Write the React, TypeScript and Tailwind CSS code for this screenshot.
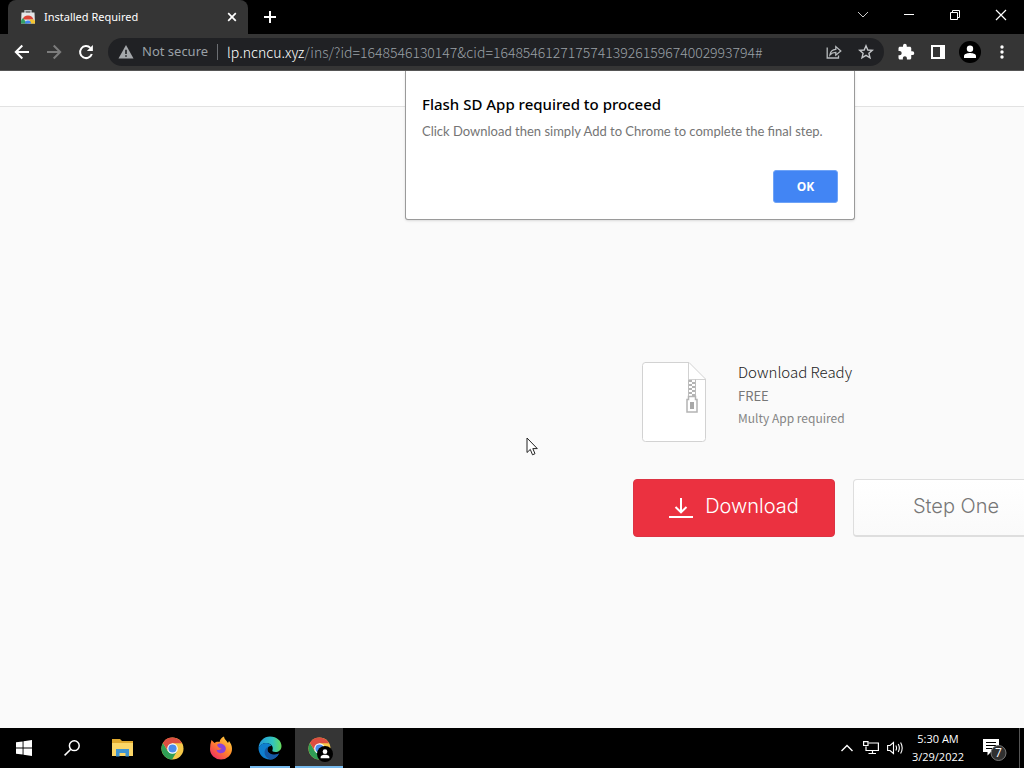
import React from 'react';

const ChromeLogo: React.FC<{ className?: string }> = ({ className }) => (
  <svg viewBox="0 0 24 24" className={className} aria-hidden="true">
    <circle cx="12" cy="12" r="11.5" fill="#f5c84a" />
    <path d="M2 6.3 A11.5 11.5 0 0 0 11.6 23.5 L16.8 14.7 L12 12 L7.2 14.8 Z" fill="#2f9e55" />
    <path d="M2 6.3 A11.5 11.5 0 0 1 22 6.5 L12 6.5 L7 14 Z" fill="#dc4e41" />
    <circle cx="12" cy="12" r="5.5" fill="#fff" />
    <circle cx="12" cy="12" r="4.3" fill="#4a8cec" />
  </svg>
);

const PersonBadge: React.FC<{ className?: string }> = ({ className }) => (
  <svg viewBox="0 0 22 22" className={className} aria-hidden="true">
    <circle cx="11" cy="11" r="11" fill="#000" />
    <circle cx="11" cy="7.8" r="3.2" fill="#fff" />
    <path d="M5 17 V15 C5 12.8 9 12 11 12 S17 12.8 17 15 V17 Z" fill="#fff" />
  </svg>
);

const StoreIcon: React.FC = () => (
  <svg viewBox="0 0 16 16" className="size-4" aria-hidden="true">
    <path d="M5 4 V1.8 H11 V4" fill="none" stroke="#b9bec2" strokeWidth="1.4" />
    <path d="M1.5 3.5 H14.5 L15 14.5 H1 Z" fill="#e4e6e8" />
    <path d="M2.5 10.5 A5.8 5.8 0 0 1 13.5 10.5 Z" fill="#db4437" />
    <path d="M1 14.5 V11.5 L3 9 L7 14.5 Z" fill="#34a065" />
    <path d="M8.5 14.5 L10 10.5 H13.5 L15 12 V14.5 Z" fill="#f4c430" />
    <path d="M5 14.5 A3 3 0 0 1 11 14.5 Z" fill="#4285f4" />
  </svg>
);

const TabStrip: React.FC = () => (
  <div className="flex h-[34px] items-stretch bg-black pl-2">
    <div className="flex w-60 items-center rounded-t-lg bg-[#353535] pl-3 pr-2">
      <StoreIcon />
      <span className="ml-2 flex-1 whitespace-nowrap font-['Noto_Sans',sans-serif] text-[11px] text-white">Installed Required</span>
      <button aria-label="Close tab" className="flex size-4 items-center justify-center">
        <svg viewBox="0 0 16 16" className="size-4" fill="none" stroke="#fff" strokeWidth="1.7">
          <path d="M4.2 4.2 L11.8 11.8 M11.8 4.2 L4.2 11.8" />
        </svg>
      </button>
    </div>
    <button aria-label="New tab" className="flex w-11 items-center justify-center">
      <svg viewBox="0 0 14 14" className="size-3.5" stroke="#fff" strokeWidth="2">
        <path d="M7 1 V13 M1 7 H13" />
      </svg>
    </button>
    <div className="ml-auto flex h-[29px]">
      <button aria-label="Search tabs" className="flex w-[46px] items-center justify-center">
        <svg viewBox="0 0 12 12" className="size-3" fill="none" stroke="#ccc">
          <path d="M1 3 L6 8 L11 3" />
        </svg>
      </button>
      <button aria-label="Minimize" className="flex w-[46px] items-center justify-center">
        <svg viewBox="0 0 12 12" className="size-3" stroke="#fff">
          <path d="M1 5.5 H11" />
        </svg>
      </button>
      <button aria-label="Restore" className="flex w-[46px] items-center justify-center">
        <svg viewBox="0 0 12 12" className="size-3" fill="none" stroke="#fff">
          <path d="M1.5 3.5 H8.5 V10.5 H1.5 Z M3.5 3.5 V1.5 H10.5 V8.5 H8.5" />
        </svg>
      </button>
      <button aria-label="Close" className="flex w-[46px] items-center justify-center">
        <svg viewBox="0 0 12 12" className="size-3" stroke="#fff" strokeWidth="1.2">
          <path d="M1 1 L11 11 M11 1 L1 11" />
        </svg>
      </button>
    </div>
  </div>
);

const Toolbar: React.FC = () => (
  <div className="flex h-[37px] items-center border-b border-[#555] bg-[#353535] pl-1.5 pr-1.5">
    <button aria-label="Back" className="flex w-8 justify-center">
      <svg viewBox="0 0 16 16" className="size-4" fill="none" stroke="#fff" strokeWidth="2">
        <path d="M15 8 H2 M8.3 1.5 L1.8 8 L8.3 14.5" />
      </svg>
    </button>
    <button aria-label="Forward" className="flex w-8 justify-center">
      <svg viewBox="0 0 16 16" className="size-4" fill="none" stroke="#7c7c7c" strokeWidth="2">
        <path d="M1 8 H14 M7.7 1.5 L14.2 8 L7.7 14.5" />
      </svg>
    </button>
    <button aria-label="Reload" className="flex w-8 justify-center">
      <svg viewBox="0 0 16 16" className="size-4" fill="none" stroke="#fff" strokeWidth="2">
        <path d="M13.8 10 A6 6 0 1 1 12.4 3.9" />
        <path d="M14.9 1 V7 H8.9 Z" fill="#fff" stroke="none" />
      </svg>
    </button>
    <div className="ml-1.5 flex h-7 min-w-0 flex-1 items-center rounded-full bg-[#202124] pl-2.5 pr-2.5 text-[13px] text-[#9aa0a6]">
      <svg viewBox="0 0 16 16" className="size-4 shrink-0" aria-hidden="true">
        <path d="M8 1 L15.5 14.5 H0.5 Z" fill="#a4a7aa" />
        <path d="M8 5.8 V10 M8 11.2 V12.8" stroke="#202124" strokeWidth="1.6" />
      </svg>
      <span className="ml-2 whitespace-nowrap font-['Noto_Sans',sans-serif]">Not secure</span>
      <span className="ml-[9px] mr-[9px] h-4 w-px shrink-0 bg-[#6b6e72]" />
      <span className="min-w-0 flex-1 overflow-hidden whitespace-nowrap font-['Noto_Sans_CJK_SC',sans-serif] text-[14px] font-light leading-5">
        <span className="text-white">lp.ncncu.xyz</span>
        /ins/?id=1648546130147&amp;cid=16485461271757413926159674002993794#
      </span>
      <button aria-label="Share" className="ml-2">
        <svg viewBox="0 0 16 16" className="size-4" fill="none" stroke="#b8bbbe" strokeWidth="1.3">
          <path d="M1.2 3.5 V14 H12.5 V11.5" />
          <path d="M4 10.8 C4.4 7.5 6.5 5.5 9.8 5.3 V2.6 L14.8 7 L9.8 11.2 V8.4 C7.3 8.4 5.5 9 4 10.8 Z" />
        </svg>
      </button>
      <button aria-label="Bookmark this tab" className="ml-4">
        <svg viewBox="0 0 16 16" className="size-4" fill="none" stroke="#c4c6c9" strokeWidth="1.4">
          <path d="M8 1.8 L9.8 6 L14.4 6.3 L10.9 9.3 L12 13.8 L8 11.4 L4 13.8 L5.1 9.3 L1.6 6.3 L6.2 6 Z" />
        </svg>
      </button>
    </div>
    <button aria-label="Extensions" className="ml-1.5 flex w-8 justify-center">
      <svg viewBox="0 0 24 24" className="size-[18px]" fill="#fff">
        <path d="M20.5 11H19V7c0-1.1-.9-2-2-2h-4V3.5a2.5 2.5 0 0 0-5 0V5H4c-1.1 0-2 .9-2 2v3.8h1.5c1.5 0 2.7 1.2 2.7 2.7S5 16.2 3.5 16.2H2V20c0 1.1.9 2 2 2h3.8v-1.5c0-1.5 1.2-2.7 2.7-2.7s2.7 1.2 2.7 2.7V22H17c1.1 0 2-.9 2-2v-4h1.5a2.5 2.5 0 0 0 0-5z" />
      </svg>
    </button>
    <button aria-label="Side panel" className="flex w-8 justify-center">
      <svg viewBox="0 0 14 14" className="size-3.5">
        <path d="M0 0 H14 V14 H0 Z M2 2 V12 H9 V2 Z" fill="#fff" fillRule="evenodd" />
      </svg>
    </button>
    <button aria-label="Profile" className="flex w-8 justify-center">
      <PersonBadge className="size-[22px]" />
    </button>
    <button aria-label="Menu" className="flex w-8 justify-center">
      <svg viewBox="0 0 16 16" className="size-4" fill="#fff">
        <circle cx="8" cy="3" r="1.7" />
        <circle cx="8" cy="8" r="1.7" />
        <circle cx="8" cy="13" r="1.7" />
      </svg>
    </button>
  </div>
);

const AlertDialog: React.FC = () => (
  <div
    role="alertdialog"
    aria-labelledby="alert-title"
    className="absolute left-[405px] top-0 flex w-[450px] flex-col rounded-b-[3px] border border-t-0 border-[#9a9a9a] bg-white px-4 pb-4 pt-[21px] shadow-sm"
  >
    <h1 id="alert-title" className="font-['Noto_Sans',sans-serif] text-[15px] font-medium leading-6 text-black">
      Flash SD App required to proceed
    </h1>
    <p className="mt-[3px] whitespace-nowrap font-['Lato',sans-serif] text-[13px] leading-6 text-[#757575]">
      Click Download then simply Add to Chrome to complete the final step.
    </p>
    <button className="mt-[27px] h-[33px] w-[65px] self-end rounded-[3px] border border-[#6ea3f7] bg-[#4285f4] text-[12px] font-bold text-white">
      OK
    </button>
  </div>
);

const FileIcon: React.FC = () => (
  <svg viewBox="0 0 64 80" className="h-20 w-16" fill="none" aria-hidden="true">
    <path d="M3 .5 H47 L63.5 17 V76.5 Q63.5 79.5 60.5 79.5 H3.5 Q.5 79.5 .5 76.5 V3.5 Q.5 .5 3.5 .5 Z" fill="#fff" stroke="#d2d2d2" />
    <path d="M46.5 .5 V17.5 H63.5" stroke="#d2d2d2" />
    <path d="M46.5 17.5 V34 M53.5 17.5 V34" stroke="#bdbdbd" />
    <path d="M48.5 18 V34" stroke="#b4b4b4" strokeWidth="3" strokeDasharray="2 2" />
    <path d="M51.5 20 V34" stroke="#b4b4b4" strokeWidth="3" strokeDasharray="2 2" />
    <path d="M46.5 34.5 H53.5 V37.5 H55 V50 H45 V37.5 H46.5 Z" fill="#fff" stroke="#b4b4b4" strokeWidth="1.5" />
    <path d="M48 40 H52 V47 H48 Z" fill="#a8a8a8" />
  </svg>
);

const MouseCursor: React.FC = () => (
  <svg viewBox="0 0 12 19" className="absolute left-[526px] top-[366px] h-[19px] w-3" aria-hidden="true">
    <path d="M1 1 V15.5 L4.3 12.4 L6.5 17.8 L9 16.7 L6.8 11.6 H11.3 Z" fill="#fff" stroke="#222" />
  </svg>
);

const Page: React.FC = () => (
  <main className="relative flex-1 overflow-hidden bg-[#fafafa]">
    <div className="h-9 border-b border-[#e2e2e2] bg-white" />
    <div className="pl-[633px] pt-[255px]">
      <div className="flex pl-[9px]">
        <FileIcon />
        <div className="ml-8 whitespace-nowrap font-['Noto_Sans_CJK_SC',sans-serif]">
          <h2 className="text-[15px] font-light leading-5 text-[#222]">Download Ready</h2>
          <p className="mt-1 text-[13px] leading-5 text-[#777]">FREE</p>
          <p className="text-[12px] leading-6 text-[#858585]">Multy App required</p>
        </div>
      </div>
      <div className="mt-[37px] flex gap-[18px] font-['Inter',sans-serif] text-[20px] font-light">
        <button className="flex h-[58px] w-[202px] shrink-0 items-center justify-center gap-3 rounded border border-[#dc3343] bg-[#eb3140] pb-1 text-white">
          <svg viewBox="0 0 24 20" className="mt-1 h-5 w-6" fill="none" stroke="#fff" strokeWidth="2">
            <path d="M12 0 V14 M6.5 9 L12 14.3 L17.5 9 M0 19 H24" />
          </svg>
          Download
        </button>
        <button className="h-[58px] w-[206px] shrink-0 rounded border border-b-2 border-[#dedede] bg-linear-to-b from-white to-[#fafafa] pb-1 text-[#777]">
          Step One
        </button>
      </div>
    </div>
    <MouseCursor />
    <AlertDialog />
  </main>
);

const Taskbar: React.FC = () => (
  <footer className="flex h-10 items-stretch bg-black text-white">
    <button aria-label="Start" className="flex w-12 items-center justify-center">
      <svg viewBox="0 0 16 16" className="size-4" fill="#fff">
        <path d="M0 2.3 L6.6 1.4 V7.5 H0 Z M7.5 1.3 L16 0 V7.5 H7.5 Z M0 8.4 H6.6 V14.6 L0 13.7 Z M7.5 8.4 H16 V16 L7.5 14.7 Z" />
      </svg>
    </button>
    <button aria-label="Search" className="flex w-12 items-center justify-center">
      <svg viewBox="0 0 16 16" className="size-4" fill="none" stroke="#fff" strokeWidth="1.5">
        <circle cx="10.3" cy="5.7" r="4.9" />
        <path d="M6.8 9.2 L.6 15.4" />
      </svg>
    </button>
    <button aria-label="File Explorer" className="ml-[3px] flex w-12 items-center justify-center">
      <svg viewBox="0 0 22 18" className="h-[18px] w-[22px]">
        <path d="M0 0 H8 L10 2 H21 V17 H0 Z" fill="#e0a92e" />
        <path d="M0 4 H21 V17 H0 Z" fill="#fbd667" />
        <path d="M4 17.5 V10 H17 V17.5 H13.5 V14 H7.5 V17.5 Z" fill="#3f94d1" />
      </svg>
    </button>
    <button aria-label="Google Chrome" className="ml-px flex w-12 items-center justify-center">
      <ChromeLogo className="size-[23px]" />
    </button>
    <button aria-label="Firefox" className="ml-px flex w-12 items-center justify-center">
      <svg viewBox="0 0 24 24" className="size-6">
        <defs>
          <linearGradient id="fox" x1="1" y1="0" x2="0.2" y2="1">
            <stop offset="0" stopColor="#ffe14a" />
            <stop offset="0.5" stopColor="#ff8a2a" />
            <stop offset="1" stopColor="#f02a63" />
          </linearGradient>
        </defs>
        <path d="M2.5 4 L5.5 7 C7 5.5 9 5.5 10.5 6 C11 3 13 1.5 15 .5 C15 3 17.5 4.5 19 7 L20 5 C22 7.5 23 10 23 13 A11 10.5 0 0 1 1 13 C1 10 1.5 7 2.5 4 Z" fill="url(#fox)" />
        <path d="M8 9 C10 6.5 15 7.5 16.5 11 C18 15 14 18 10.5 17 C8.5 16.5 7.5 15 7.5 13.5 C9 14.5 11 14 12.5 12.5 C10.5 12.5 9 11 8 9 Z" fill="#8a42d8" />
      </svg>
    </button>
    <button aria-label="Microsoft Edge" className="ml-[5px] flex w-10 items-center justify-center border-b-2 border-[#76b9ed] pt-0.5">
      <svg viewBox="0 0 24 24" className="size-6">
        <defs>
          <linearGradient id="edge-top" x1="0" y1="0.5" x2="1" y2="0.5">
            <stop offset="0" stopColor="#2497dc" />
            <stop offset="0.6" stopColor="#30c3c2" />
            <stop offset="1" stopColor="#65db5b" />
          </linearGradient>
        </defs>
        <path d="M.5 12 C1 5 6 .5 12 .5 C19 .5 23.5 5 23.5 10 C23.5 14 20.5 16 17.5 16 C15 16 13.8 15 14.5 14 C16 10 12 7 8 7 C5 7 2 9 .5 12 Z" fill="url(#edge-top)" />
        <path d="M.5 12 C2 8.5 5 7 8 7 C11 7 13 8.5 13.5 10 C10 9.5 8.5 13 10 16 C12 19.5 17 20 21 17.5 C18.5 21.5 15.5 23.5 12 23.5 C5 23.5 .5 18 .5 12 Z" fill="#0f7fcf" />
        <path d="M10 10.5 C4.5 14 6 21 12 23.5 C16 23.5 19 21.5 21 17.5 C15 20.5 7 17 10 10.5 Z" fill="#1558a5" />
      </svg>
    </button>
    <button aria-label="Google Chrome, active window" className="relative ml-[5px] flex w-12 items-center justify-center border-b-2 border-[#76b9ed] bg-[#353535] pt-0.5">
      <ChromeLogo className="size-[23px]" />
      <PersonBadge className="absolute left-[22px] top-[18px] size-4" />
    </button>
    <div className="ml-auto flex items-center">
      <button aria-label="Show hidden icons" className="flex w-6 justify-center">
        <svg viewBox="0 0 12 12" className="size-3" fill="none" stroke="#fff" strokeWidth="1.4">
          <path d="M.5 9 L6 3.5 L11.5 9" />
        </svg>
      </button>
      <button aria-label="Network" className="flex w-6 justify-center">
        <svg viewBox="0 0 16 16" className="size-4" fill="none" stroke="#fff" strokeWidth="1.2">
          <path d="M5.5 3 H15.4 V10.5 H3 V6.5 M9.5 10.5 V13.5 M5.5 13.5 H13" />
          <path d="M.6 1.6 H5 V5.5 H.6 Z" />
        </svg>
      </button>
      <button aria-label="Volume" className="flex w-6 justify-center">
        <svg viewBox="0 0 17 16" className="h-4 w-[17px]" fill="none" stroke="#fff" strokeWidth="1.1">
          <path d="M.6 5.5 H3 L6.5 2.5 V13.5 L3 10.5 H.6 Z" />
          <path d="M8.8 5.5 Q10.3 8 8.8 10.5 M11.2 4 Q13.5 8 11.2 12 M13.6 2.5 Q16.8 8 13.6 13.5" />
        </svg>
      </button>
      <time className="flex w-[62px] flex-col items-center whitespace-nowrap text-[11px] leading-[18px]">
        <span>5:30 AM</span>
        <span>3/29/2022</span>
      </time>
      <button aria-label="7 notifications" className="ml-[13px] mr-[11px] flex">
        <svg viewBox="0 0 26 26" className="size-[26px]">
          <path d="M1 4 H17 V17 H9 L5.5 20.5 V17 H1 Z" fill="#fff" />
          <path d="M4 7.5 H14 M4 10.5 H14 M4 13.5 H10" stroke="#000" />
          <circle cx="16.5" cy="18" r="7.5" fill="#303030" stroke="#777" />
          <text x="16.5" y="22" fontSize="12" fill="#fff" textAnchor="middle">7</text>
        </svg>
      </button>
      <span className="mr-1 h-10 w-px bg-[#555]" />
    </div>
  </footer>
);

const App: React.FC = () => {
  return (
    <div className="flex min-h-screen flex-col overflow-hidden font-['Open_Sans','Noto_Sans',sans-serif]">
      <TabStrip />
      <Toolbar />
      <Page />
      <Taskbar />
    </div>
  );
};

export default App;
